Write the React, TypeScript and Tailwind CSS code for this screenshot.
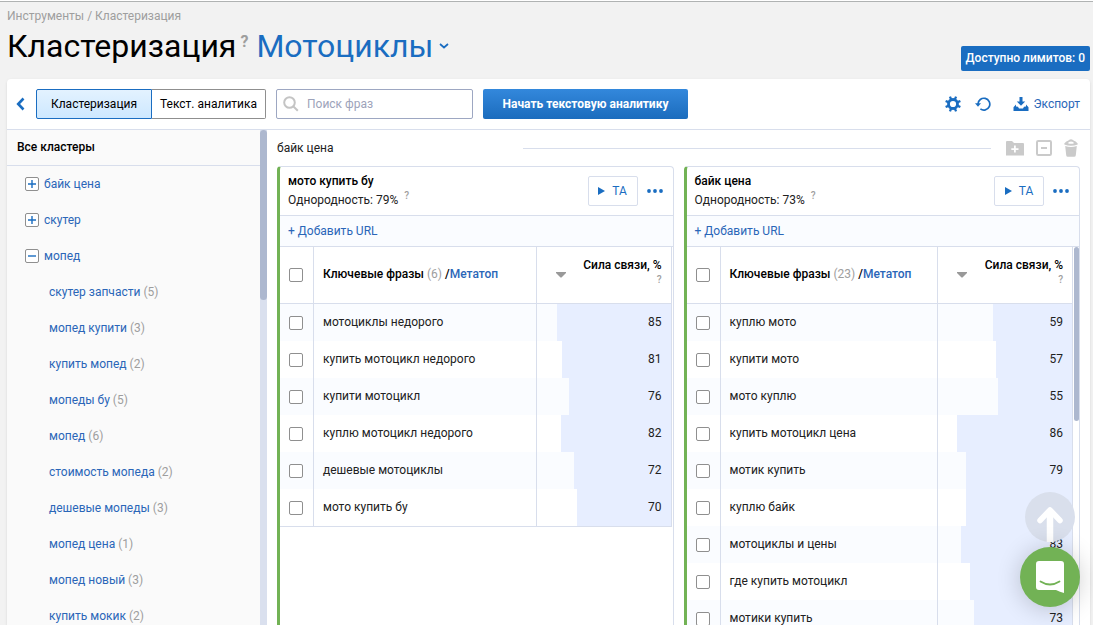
import React, { useState } from 'react';
import clsx from 'clsx';

interface Phrase {
  text: string;
  strength: number;
}

interface Cluster {
  name: string;
  uniformity: number;
  total: number;
  scrollable: boolean;
  phrases: Phrase[];
}

const groups = [
  { name: 'байк цена', open: false },
  { name: 'скутер', open: false },
  { name: 'мопед', open: true },
];

const subClusters = [
  { name: 'скутер запчасти', count: 5 },
  { name: 'мопед купити', count: 3 },
  { name: 'купить мопед', count: 2 },
  { name: 'мопеды бу', count: 5 },
  { name: 'мопед', count: 6 },
  { name: 'стоимость мопеда', count: 2 },
  { name: 'дешевые мопеды', count: 3 },
  { name: 'мопед цена', count: 1 },
  { name: 'мопед новый', count: 3 },
  { name: 'купить мокик', count: 2 },
];

const clusters: Cluster[] = [
  {
    name: 'мото купить бу',
    uniformity: 79,
    total: 6,
    scrollable: false,
    phrases: [
      { text: 'мотоциклы недорого', strength: 85 },
      { text: 'купить мотоцикл недорого', strength: 81 },
      { text: 'купити мотоцикл', strength: 76 },
      { text: 'куплю мотоцикл недорого', strength: 82 },
      { text: 'дешевые мотоциклы', strength: 72 },
      { text: 'мото купить бу', strength: 70 },
    ],
  },
  {
    name: 'байк цена',
    uniformity: 73,
    total: 23,
    scrollable: true,
    phrases: [
      { text: 'куплю мото', strength: 59 },
      { text: 'купити мото', strength: 57 },
      { text: 'мото куплю', strength: 55 },
      { text: 'купить мотоцикл цена', strength: 86 },
      { text: 'мотик купить', strength: 79 },
      { text: 'куплю байк', strength: 79 },
      { text: 'мотоциклы и цены', strength: 83 },
      { text: 'где купить мотоцикл', strength: 76 },
      { text: 'мотики купить', strength: 73 },
    ],
  },
];

const GearIcon = () => (
  <svg width="16" height="16" viewBox="0 0 16 16" fill="none" stroke="currentColor">
    <circle cx="8" cy="8" r="4.500" strokeWidth="2.800" />
    {[0, 45, 90, 135, 180, 225, 270, 315].map((angle) => (
      <path key={angle} d="M8 0v3" strokeWidth="2.300" transform={`rotate(${angle + 22.5} 8 8)`} />
    ))}
  </svg>
);

const RestoreIcon = () => (
  <svg width="16" height="16" viewBox="0 0 16 16" fill="none" stroke="currentColor">
    <path d="M3 9V8a5.900 5.900 0 1 1 2.400 4.900" strokeWidth="1.700" />
    <path d="M0 7.200h6L3 10.800z" fill="currentColor" stroke="none" />
  </svg>
);

const ExportIcon = () => (
  <svg width="16" height="16" viewBox="0 0 16 16" fill="currentColor">
    <path d="M6.500 1h3v4.500h2.700L8 9.700 3.800 5.500h2.700z" />
    <path d="M3 8.600v1.800l2 .4 1 1.600h4l1-1.600 2-.4V8.600l2.500 2.700V15H.5v-3.700z" />
  </svg>
);

const FolderPlusIcon = () => (
  <svg width="18" height="16" viewBox="0 0 18 16" fill="currentColor">
    <path fillRule="evenodd" d="M0 2q0-1 1-1h5l2 2h9q1 0 1 1v11.500H0zM8 5.500v2.700H5.300v1.700H8v2.700h1.800V9.900h2.700V8.200H9.800V5.500z" />
  </svg>
);

const MinusBoxIcon = () => (
  <svg width="16" height="16" viewBox="0 0 16 16" fill="none" stroke="currentColor" strokeWidth="2">
    <rect x="1" y="1" width="14" height="14" rx="1.200" />
    <path d="M5 8h6" />
  </svg>
);

const TrashIcon = () => (
  <svg width="14" height="18" viewBox="0 0 14 18">
    <path d="M.3 4.500Q2.500 2 4 1.800 5.200.2 7 .2t3 1.600q1.500.2 3.700 2.700v1Q7 8 .3 5.500z" fill="currentColor" />
    <path d="M4 4.300Q4.200 2.600 7 2.600t3 1.700Q7 5.300 4 4.300z" fill="#fff" />
    <path d="M1.200 7q5.800 1.800 11.600 0l-1 9.200q-.2 1.600-1.600 1.600H3.800q-1.400 0-1.600-1.600z" fill="currentColor" />
  </svg>
);

const Checkbox: React.FC<{ label: string }> = ({ label }) => (
  <input
    type="checkbox"
    aria-label={label}
    className="ml-[9px] block size-3.5 appearance-none rounded-xs border border-[#8f8f8f] bg-white checked:bg-[#1a6dc1]"
  />
);

const ClusterCard: React.FC<{ cluster: Cluster }> = ({ cluster }) => (
  <section className="flex min-h-0 min-w-0 flex-col overflow-hidden rounded-t-sm border border-b-0 border-l-3 border-[#d8deec] border-l-[#72b255] bg-white">
    <header className="flex h-12 shrink-0 items-center pr-2.5 pl-2">
      <div className="min-w-0 flex-1 leading-[19px]">
        <h3 className="font-medium text-black">{cluster.name}</h3>
        <p>
          Однородность: {cluster.uniformity}%
          <sup className="ml-1.5 text-[10px] font-medium text-[#9e9e9e]">?</sup>
        </p>
      </div>
      <button className="flex h-[30px] w-[50px] items-center justify-center gap-[7px] rounded-xs border border-[#d8deec] text-[#1a6dc1]">
        <svg width="7" height="8" viewBox="0 0 7 8" fill="currentColor">
          <path d="M0 0l7 4-7 4z" />
        </svg>
        ТА
      </button>
      <button aria-label="Меню" className="ml-[9px] text-[#1a6dc1]">
        <svg width="16" height="4" viewBox="0 0 16 4" fill="currentColor">
          <circle cx="2" cy="2" r="1.900" />
          <circle cx="8" cy="2" r="1.900" />
          <circle cx="14" cy="2" r="1.900" />
        </svg>
      </button>
    </header>

    <div className="flex h-8 shrink-0 items-center border-y border-[#d8deec] bg-[#fafcff] pl-2">
      <a href="#add-url" className="text-[#2a66b8]">+ Добавить URL</a>
    </div>

    <div className="flex min-h-0 flex-1 items-start">
      <table className="w-full flex-1 table-fixed border-separate border-spacing-0">
        <thead>
          <tr className="h-[57px]">
            <th className="w-[34px] border-r border-b border-[#d8deec] p-0">
              <Checkbox label="Выбрать все" />
            </th>
            <th className="border-r border-b border-[#d8deec] p-0 pb-0.5 pl-[9px] text-left font-medium whitespace-nowrap text-black">
              Ключевые фразы <span className="font-normal text-[#9e9e9e]">({cluster.total})</span> /
              <a href="#metatop" className="text-[#2a66b8]">Метатоп</a>
            </th>
            <th className="w-[135px] border-r border-b border-[#d8deec] p-0 font-medium text-black">
              <div className="flex items-center justify-between pr-[9px] pl-[19px]">
                <svg width="10" height="6" viewBox="0 0 10 6" fill="#999">
                  <path d="M0 0h10v1L5.500 5.500h-1L0 1z" />
                </svg>
                <div className="pb-1.5 text-right leading-4 whitespace-nowrap">
                  Сила связи, %
                  <div className="text-[10px] leading-[14px] text-[#9e9e9e]">?</div>
                </div>
              </div>
            </th>
          </tr>
        </thead>
        <tbody>
          {cluster.phrases.map((phrase, i) => {
            const last = !cluster.scrollable && i === cluster.phrases.length - 1;
            return (
              <tr key={phrase.text} className={clsx('h-[37px]', i % 2 === 0 && 'bg-[#fafcff]')}>
                <td className={clsx('border-r border-[#d8deec] p-0', last && 'border-b')}>
                  <Checkbox label={phrase.text} />
                </td>
                <td className={clsx('border-r border-[#d8deec] p-0 pb-0.5 pl-[9px] whitespace-nowrap', last && 'border-b')}>
                  {phrase.text}
                </td>
                <td className={clsx('border-r border-[#d8deec] p-0', last && 'border-b')}>
                  <div
                    className="ml-auto flex h-[37px] items-center justify-end bg-[#e7eeff] pr-[9px] pb-0.5"
                    style={{ width: `${phrase.strength}%` }}
                  >
                    {phrase.strength}
                  </div>
                </td>
              </tr>
            );
          })}
        </tbody>
      </table>
      {cluster.scrollable ? (
        <div className="ml-px h-[174px] w-[5px] shrink-0 rounded-full bg-[#adb8cf]" />
      ) : (
        <div className="w-px shrink-0" />
      )}
    </div>
  </section>
);

export default function App() {
  const [tab, setTab] = useState<'clusters' | 'text'>('clusters');

  return (
    <div className="relative flex h-screen flex-col overflow-hidden border-t border-white bg-[#f2f2f2] font-[Roboto,'Liberation_Sans',sans-serif] text-xs text-[#212121]">
      {/* Page header */}
      <header className="flex h-[78px] shrink-0 items-end justify-between border-t border-[#b0b3b3] pr-[3px] pl-[7px]">
        <div className="self-start pt-1.5">
          <nav className="leading-4 text-[#9e9e9e]">
            <a href="#tools">Инструменты</a> / <a href="#clustering">Кластеризация</a>
          </nav>
          <h1 className="mt-0.5 flex text-[32px] leading-10 text-black">
            Кластеризация
            <span className="mt-2 ml-1 text-base leading-4 font-bold text-[#9e9e9e]">?</span>
            <button className="ml-2 flex items-center gap-1.5 text-[#1a6dc1]">
              Мотоциклы
              <svg width="10" height="6" viewBox="0 0 10 6" fill="none" stroke="currentColor" strokeWidth="1.700">
                <path d="M1 1l4 3.500L9 1" />
              </svg>
            </button>
          </h1>
        </div>
        <div className="mb-2 rounded-xs bg-[#1a6dc1] px-[5px] leading-[25px] font-medium text-white">
          Доступно лимитов: 0
        </div>
      </header>

      <main className="mr-[3px] ml-[7px] flex min-h-0 flex-1 flex-col rounded-t-sm bg-white shadow-sm">
        {/* Toolbar */}
        <div className="flex h-[51px] shrink-0 items-center border-b border-[#d8deec] pr-2.5 pl-[9px]">
          <button aria-label="Назад" className="mr-[11px] text-[#1a6dc1]">
            <svg width="9" height="14" viewBox="0 0 9 14" fill="none" stroke="currentColor" strokeWidth="2.600">
              <path d="M7.500 1.500L2.200 7l5.300 5.500" />
            </svg>
          </button>
          <div className="flex h-[30px] w-[230px] text-black">
            <button
              onClick={() => setTab('clusters')}
              className={clsx(
                'w-[116px] rounded-l-xs border',
                tab === 'clusters' ? 'border-[#1a6dc1] bg-linear-to-b from-[#e3f2ff] to-[#cde8ff]' : 'border-[#8f8f8f]'
              )}
            >
              Кластеризация
            </button>
            <button
              onClick={() => setTab('text')}
              className={clsx(
                'flex-1 rounded-r-xs border border-l-0',
                tab === 'text' ? 'border-[#1a6dc1] bg-linear-to-b from-[#e3f2ff] to-[#cde8ff]' : 'border-[#8f8f8f]'
              )}
            >
              Текст. аналитика
            </button>
          </div>
          <label className="ml-2.5 flex h-[30px] w-[197px] items-center gap-2 rounded-xs border border-[#9da7c2] pl-1.5">
            <svg width="16" height="16" viewBox="0 0 16 16" fill="none" stroke="#c4c4c4" strokeWidth="2">
              <circle cx="6.500" cy="6.500" r="5.300" />
              <path d="M10.200 10.200l4.600 4.600" />
            </svg>
            <input
              type="text"
              aria-label="Поиск фраз"
              placeholder="Поиск фраз"
              className="min-w-0 flex-1 outline-none placeholder:text-[#9da3ba]"
            />
          </label>
          <button className="ml-2.5 h-[30px] w-[205px] rounded-xs bg-linear-to-b from-[#3388dc] to-[#1b6cbd] font-bold text-white">
            Начать текстовую аналитику
          </button>
          <div className="ml-auto flex items-center text-[#1a6dc1]">
            <button aria-label="Настройки"><GearIcon /></button>
            <button aria-label="Обновить" className="ml-3.5"><RestoreIcon /></button>
            <button className="ml-[22px] flex items-center gap-1 text-[#2a66b8]">
              <span className="text-[#1a6dc1]"><ExportIcon /></span>
              Экспорт
            </button>
          </div>
        </div>

        <div className="flex min-h-0 flex-1">
          {/* Cluster tree */}
          <aside className="flex w-[260px] shrink-0 bg-[#fafafa]">
            <div className="min-w-0 flex-1 overflow-hidden">
              <h2 className="h-9 border-b border-[#d8deec] pl-2.5 leading-[34px] font-medium text-black">Все кластеры</h2>
              <ul>
                {groups.map((group) => (
                  <li key={group.name} className="flex h-9 items-center gap-[5px] pl-[18px] text-[#2a66b8]">
                    <button
                      aria-label={group.open ? 'Свернуть' : 'Развернуть'}
                      className="flex size-3.5 items-center justify-center rounded-xs border border-[#8f8f8f] bg-white text-[#1a6dc1]"
                    >
                      <svg width="8" height="8" viewBox="0 0 8 8" stroke="currentColor" strokeWidth="1.400">
                        <path d={group.open ? 'M0 4h8' : 'M0 4h8M4 0v8'} />
                      </svg>
                    </button>
                    <a href="#group">{group.name}</a>
                  </li>
                ))}
                {subClusters.map((item) => (
                  <li key={item.name} className="h-9 pl-[42px] leading-9 text-[#9e9e9e]">
                    <a href="#cluster" className="text-[#2a66b8]">{item.name}</a> ({item.count})
                  </li>
                ))}
              </ul>
            </div>
            <div className="w-[7px] shrink-0 bg-[#dae0ee]">
              <div className="h-[170px] rounded-full bg-[#adb8cf]" />
            </div>
          </aside>

          {/* Opened clusters */}
          <div className="flex min-w-0 flex-1 flex-col px-2.5">
            <div className="flex h-9 shrink-0 items-center text-[#cacaca]">
              <h2 className="w-[246px] text-[#212121]">байк цена</h2>
              <div className="h-px flex-1 bg-[#d8deec]" />
              <div className="mr-0.5 ml-[15px] flex items-center gap-3">
                <button aria-label="Добавить в группу"><FolderPlusIcon /></button>
                <button aria-label="Свернуть группу"><MinusBoxIcon /></button>
                <button aria-label="Удалить"><TrashIcon /></button>
              </div>
            </div>
            <div className="grid min-h-0 flex-1 grid-cols-2 gap-2.5">
              {clusters.map((cluster) => (
                <ClusterCard key={cluster.name} cluster={cluster} />
              ))}
            </div>
          </div>
        </div>
      </main>

      {/* Floating buttons */}
      <button aria-label="Наверх" className="absolute right-[18px] bottom-[83px] size-[50px] rounded-full bg-[#d9dfec]">
        <svg width="50" height="50" viewBox="0 0 50 50" fill="none" stroke="#fff" strokeLinecap="round" strokeLinejoin="round">
          <path d="M15 28.500L25 18l10 10.500" strokeWidth="5.500" />
          <path d="M25 19v31" strokeWidth="6.500" strokeLinecap="butt" />
        </svg>
      </button>
      <button aria-label="Чат" className="absolute right-[13px] bottom-[18px] size-[60px] rounded-full bg-[#72b255] shadow-[0_2px_24px_rgba(0,0,0,0.2)]">
        <svg width="60" height="60" viewBox="0 0 60 60">
          <path d="M19 14h22q3 0 3 3v29q-4-1-8-3H19q-3 0-3-3V17q0-3 3-3z" fill="#fff" />
          <path d="M20.500 34.500q9.500 6 19 0" fill="none" stroke="#72b255" strokeWidth="1.800" strokeLinecap="round" />
        </svg>
      </button>
    </div>
  );
}
